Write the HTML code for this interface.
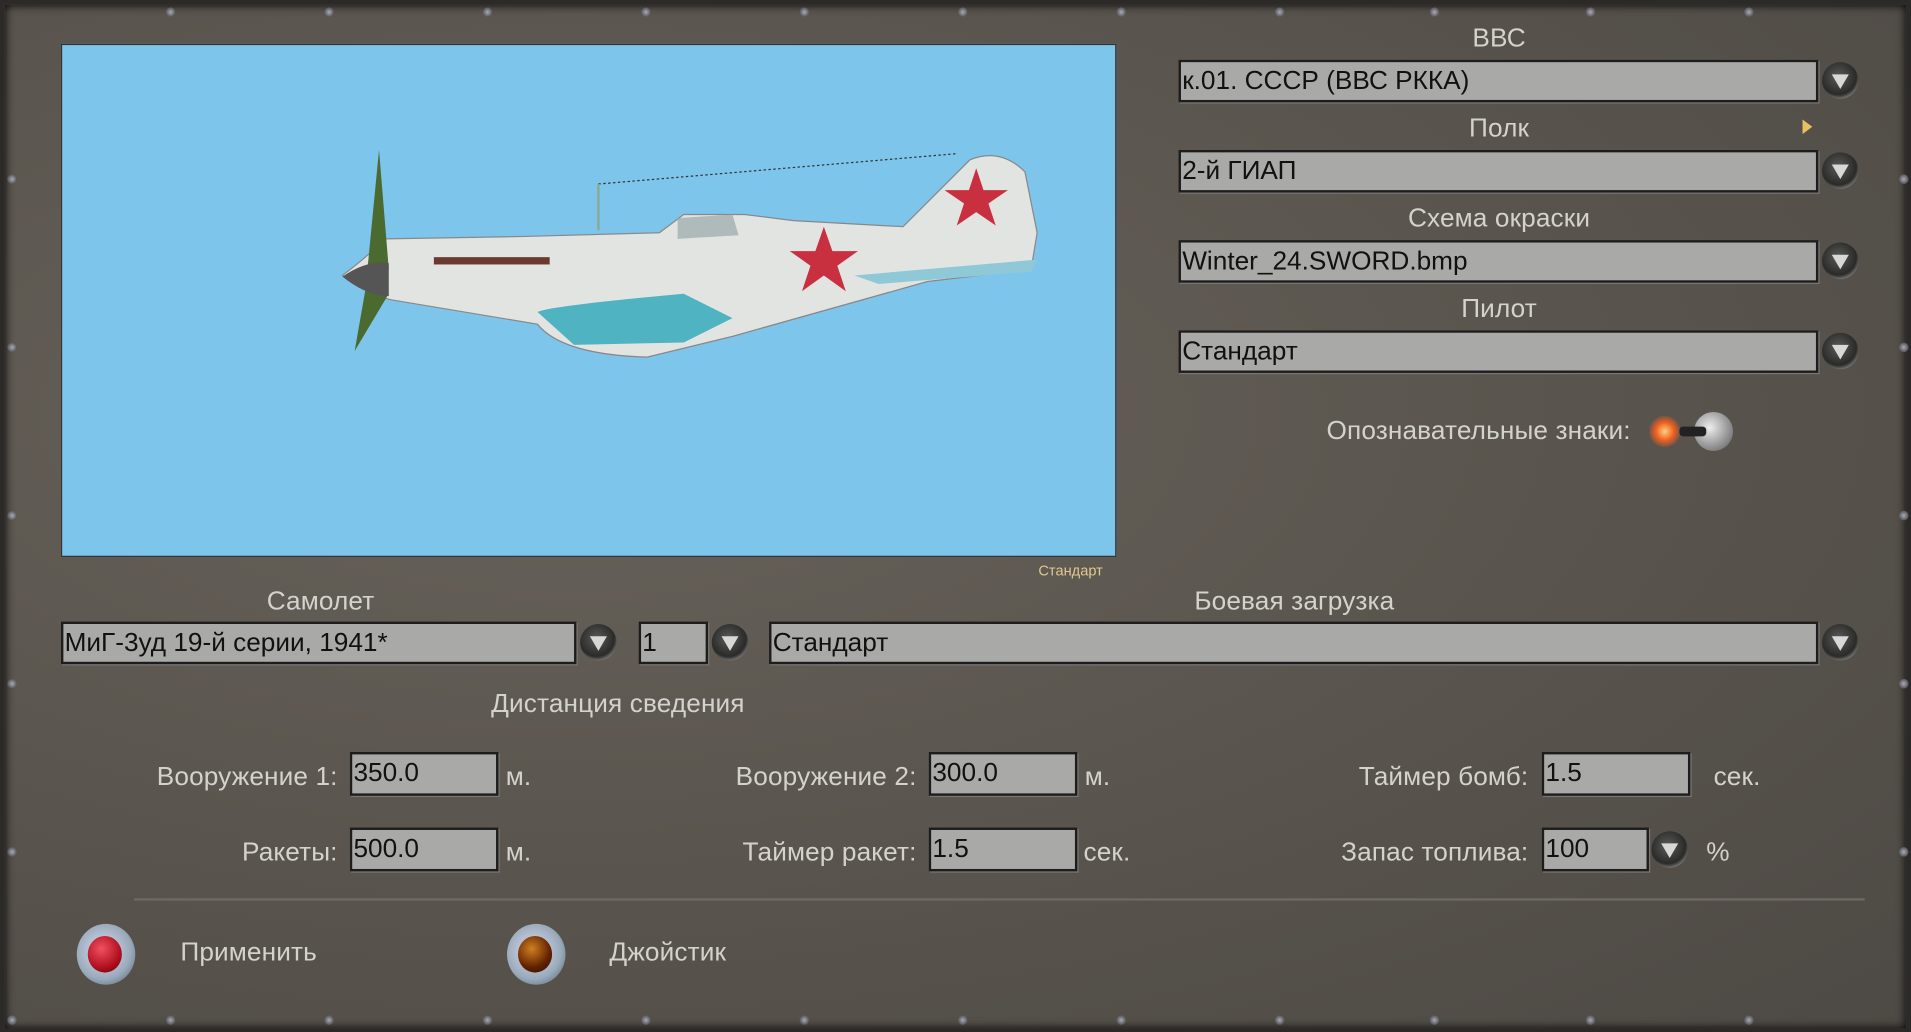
<!DOCTYPE html>
<html><head><meta charset="utf-8"><style>
html,body{margin:0;padding:0;width:1911px;height:1032px;overflow:hidden;background:#2a2826}
#w{position:absolute;left:0;top:0;width:1568px;height:847px;transform:scale(1.21875);transform-origin:0 0;
background:radial-gradient(ellipse at 30% 40%,#67625a 0%,#5a554e 50%,#4d4944 100%);font-family:"Liberation Sans",sans-serif;overflow:hidden}
.frame{position:absolute;left:0;top:0;width:1560px;height:840px;border:4px solid #2c2a28;box-shadow:inset 0 0 8px #000}
.a{position:absolute;white-space:nowrap;color:#d4d2cc;font-size:21.5px;letter-spacing:0.1px;line-height:1}
.c{transform:translateX(-50%)}
.r{transform:translateX(-100%)}
.box{position:absolute;background:#a9a9a7;border:2px solid #1e1d1b;box-sizing:border-box;color:#111;font-size:21.5px;letter-spacing:0;padding-left:1px;line-height:30px;white-space:nowrap;overflow:hidden;box-shadow:1px 1px 0 #777}
.btn{position:absolute;width:30px;height:30px;border-radius:50%;background:radial-gradient(circle at 45% 40%,#5a5a58,#2a2a28 60%,#777 75%,#3a3a38);transform:translate(-50%,-50%)}
.btn:after{content:"";position:absolute;left:8px;top:10px;border-left:7px solid transparent;border-right:7px solid transparent;border-top:12px solid #d8d8d6}
.scr{position:absolute;width:8px;height:8px;border-radius:50%;background:radial-gradient(circle,#aab 0,#555 70%);transform:translate(-50%,-50%)}
</style></head><body><div id="w">
<div class="frame"></div>
<div style="position:absolute;left:110px;top:737px;width:1420px;height:2px;background:#6d6962"></div>
<div style="position:absolute;left:50px;top:36px;width:866px;height:421px;background:#7dc5eb;border:1px solid #333;box-sizing:border-box">
<svg width="866" height="421" viewBox="50 36 866 421" style="position:absolute;left:0;top:0">
<path d="M490 150 L785 125" stroke="#333" stroke-width="1" stroke-dasharray="2 2" fill="none"/>
<line x1="490" y1="150" x2="490" y2="188" stroke="#8a9" stroke-width="2"/>
<path d="M315 195 Q300 210 280 225 Q300 240 320 245 L440 265 Q460 290 530 292 L600 275 L760 230 L845 220 L850 190 L840 140 Q820 120 795 130 L740 185 L650 180 L610 175 L560 175 L540 190 L430 193 Z" fill="#e2e4e2" stroke="#888"/>
<path d="M440 255 Q450 250 560 240 L600 260 L560 280 L470 282 Z" fill="#4fb3c2"/>
<path d="M700 225 L850 212 L845 222 L720 232 Z" fill="#8fc9d8"/>
<path d="M300 225 L310 122 L318 220 Z M300 230 L290 287 L318 240 Z" fill="#4a6a30"/>
<path d="M280 226 Q300 212 318 215 L318 242 Q300 242 280 226Z" fill="#555"/>
<polygon points="675,185 682,205 703,205 686,217 693,238 675,225 657,238 664,217 647,205 668,205" fill="#c83040"/>
<polygon points="800,137 806,155 826,155 810,166 816,184 800,173 784,184 790,166 774,155 794,155" fill="#c83040"/>
<rect x="355" y="210" width="95" height="6" fill="#6a3a30"/>
<path d="M555 178 L600 175 L605 192 L555 195Z" fill="#9aa" opacity=".7"/>
</svg></div>
<div class="a" style="left:852px;top:462px;font-size:12px;color:#e0c890;letter-spacing:0">Стандарт</div>

<div class="a c" style="left:1230px;top:21px">ВВС</div>
<div class="box" style="left:967px;top:49px;width:525px;height:35px">к.01. СССР (ВВС РККА)</div>
<div class="btn" style="left:1510px;top:66px"></div>
<div class="a c" style="left:1230px;top:95px">Полк</div>
<div class="box" style="left:967px;top:123px;width:525px;height:35px">2-й ГИАП</div>
<div class="btn" style="left:1510px;top:140px"></div>
<div class="a c" style="left:1230px;top:169px">Схема окраски</div>
<div class="box" style="left:967px;top:197px;width:525px;height:35px">Winter_24.SWORD.bmp</div>
<div class="btn" style="left:1510px;top:214px"></div>
<div class="a c" style="left:1230px;top:243px">Пилот</div>
<div class="box" style="left:967px;top:271px;width:525px;height:35px">Стандарт</div>
<div class="btn" style="left:1510px;top:288px"></div>
<div style="position:absolute;left:1479px;top:98px;border-top:6px solid transparent;border-bottom:6px solid transparent;border-left:8px solid #e8c060"></div>
<div class="a r" style="left:1338px;top:343px">Опознавательные знаки:</div>
<div style="position:absolute;left:1353px;top:341px;width:26px;height:26px;border-radius:50%;background:radial-gradient(circle,#ffd080 0,#f06020 40%,rgba(200,60,20,0) 75%)"></div>
<div style="position:absolute;left:1390px;top:338px;width:32px;height:32px;border-radius:50%;background:radial-gradient(circle at 40% 40%,#eee,#999 55%,#555)"></div>
<div style="position:absolute;left:1378px;top:350px;width:22px;height:8px;background:#222;border-radius:3px"></div>

<div class="a c" style="left:263px;top:483px">Самолет</div>
<div class="box" style="left:50px;top:510px;width:423px;height:35px">МиГ-3уд 19-й серии, 1941*</div>
<div class="btn" style="left:491px;top:527px"></div>
<div class="box" style="left:524px;top:510px;width:57px;height:35px">1</div>
<div class="btn" style="left:599px;top:527px"></div>
<div class="a c" style="left:1062px;top:483px">Боевая загрузка</div>
<div class="box" style="left:631px;top:510px;width:861px;height:35px">Стандарт</div>
<div class="btn" style="left:1510px;top:527px"></div>
<div class="a c" style="left:507px;top:567px">Дистанция сведения</div>

<div class="a r" style="left:277px;top:627px">Вооружение 1:</div>
<div class="box" style="left:287px;top:617px;width:122px;height:36px">350.0</div>
<div class="a" style="left:415px;top:627px">м.</div>
<div class="a r" style="left:752px;top:627px">Вооружение 2:</div>
<div class="box" style="left:762px;top:617px;width:122px;height:36px">300.0</div>
<div class="a" style="left:890px;top:627px">м.</div>
<div class="a r" style="left:1254px;top:627px">Таймер бомб:</div>
<div class="box" style="left:1265px;top:617px;width:122px;height:36px">1.5</div>
<div class="a" style="left:1406px;top:627px">сек.</div>

<div class="a r" style="left:277px;top:689px">Ракеты:</div>
<div class="box" style="left:287px;top:679px;width:122px;height:36px">500.0</div>
<div class="a" style="left:415px;top:689px">м.</div>
<div class="a r" style="left:752px;top:689px">Таймер ракет:</div>
<div class="box" style="left:762px;top:679px;width:122px;height:36px">1.5</div>
<div class="a" style="left:889px;top:689px">сек.</div>
<div class="a r" style="left:1254px;top:689px">Запас топлива:</div>
<div class="box" style="left:1265px;top:679px;width:88px;height:36px">100</div>
<div class="btn" style="left:1370px;top:697px"></div>
<div class="a" style="left:1400px;top:689px">%</div>

<div style="position:absolute;left:63px;top:758px;width:48px;height:50px;border-radius:50%;background:radial-gradient(circle at 45% 45%,#dde 0,#9ab 60%,#456 100%)"></div>
<div style="position:absolute;left:72px;top:768px;width:28px;height:30px;border-radius:50%;background:radial-gradient(circle at 40% 35%,#f05060,#b01020 60%,#600)"></div>
<div class="a" style="left:148px;top:771px">Применить</div>
<div style="position:absolute;left:416px;top:758px;width:48px;height:50px;border-radius:50%;background:radial-gradient(circle at 45% 45%,#dde 0,#9ab 60%,#456 100%)"></div>
<div style="position:absolute;left:425px;top:768px;width:28px;height:30px;border-radius:50%;background:radial-gradient(circle at 40% 35%,#d08020,#602000 60%,#301000)"></div>
<div class="a" style="left:500px;top:771px">Джойстик</div>

<div class="scr" style="left:140px;top:10px"></div><div class="scr" style="left:270px;top:10px"></div><div class="scr" style="left:400px;top:10px"></div><div class="scr" style="left:530px;top:10px"></div><div class="scr" style="left:660px;top:10px"></div><div class="scr" style="left:790px;top:10px"></div><div class="scr" style="left:920px;top:10px"></div><div class="scr" style="left:1050px;top:10px"></div><div class="scr" style="left:1177px;top:10px"></div><div class="scr" style="left:1305px;top:10px"></div><div class="scr" style="left:1435px;top:10px"></div>
<div class="scr" style="left:10px;top:837px"></div><div class="scr" style="left:140px;top:837px"></div><div class="scr" style="left:270px;top:837px"></div><div class="scr" style="left:400px;top:837px"></div><div class="scr" style="left:530px;top:837px"></div><div class="scr" style="left:660px;top:837px"></div><div class="scr" style="left:790px;top:837px"></div><div class="scr" style="left:920px;top:837px"></div><div class="scr" style="left:1050px;top:837px"></div><div class="scr" style="left:1177px;top:837px"></div><div class="scr" style="left:1305px;top:837px"></div><div class="scr" style="left:1435px;top:837px"></div>
<div class="scr" style="left:10px;top:147px"></div><div class="scr" style="left:10px;top:285px"></div><div class="scr" style="left:10px;top:423px"></div><div class="scr" style="left:10px;top:561px"></div><div class="scr" style="left:10px;top:699px"></div>
<div class="scr" style="left:1562px;top:147px"></div><div class="scr" style="left:1562px;top:285px"></div><div class="scr" style="left:1562px;top:423px"></div><div class="scr" style="left:1562px;top:561px"></div><div class="scr" style="left:1562px;top:699px"></div>
</div></body></html>
